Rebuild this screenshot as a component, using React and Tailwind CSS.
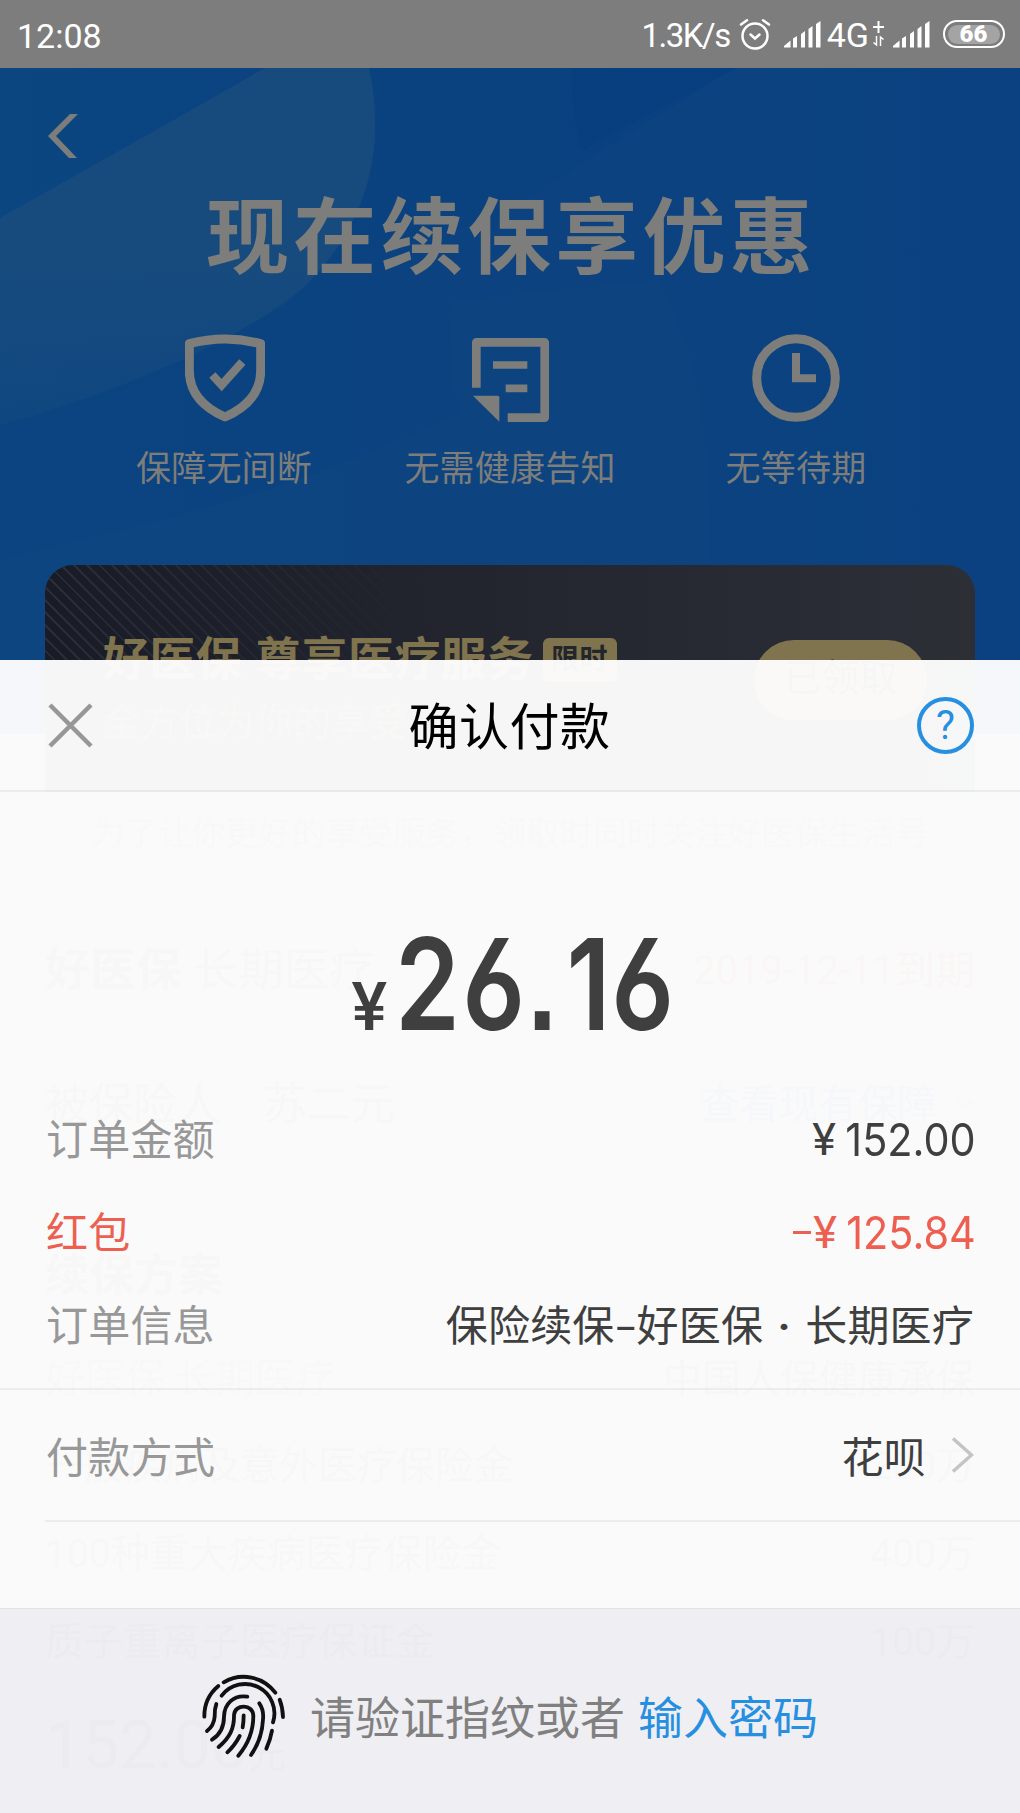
const FONT = "font-['Roboto','Noto_Sans_CJK_SC',sans-serif]"
const DIN = "font-['Inter','Noto_Sans_CJK_SC',sans-serif]"

const features = [
  { icon: ShieldIcon, label: '保障无间断' },
  { icon: NoticeIcon, label: '无需健康告知' },
  { icon: ClockIcon, label: '无等待期' },
]

const plans = [
  { name: '一般疾病及意外医疗保险金', value: '200万' },
  { name: '100种重大疾病医疗保险金', value: '400万' },
  { name: '质子重离子医疗保证金', value: '100万' },
]

function ShieldIcon() {
  return (
    <svg className="w-[80px] h-[88px] ml-[1px]" viewBox="255 70 240 264" fill="none" stroke="currentColor">
      <path strokeWidth="27" strokeLinejoin="round" d="M268 99Q375 71 482 99V180C482 250 436 292 375 319C314 292 268 250 268 180Z" />
      <path strokeWidth="25" d="M337 193L365 223L427 154" />
    </svg>
  )
}

function NoticeIcon() {
  return (
    <svg className="w-[77px] h-[84px] mt-[4px]" viewBox="157 85 231 252" fill="none" stroke="currentColor" strokeWidth="26">
      <path strokeLinejoin="round" d="M170 234V98H375V324H264" />
      <path strokeWidth="23" d="M220 166H323M258 236H323" />
      <path fill="currentColor" stroke="none" d="M160 258H234Q239 258 239 263V336Z" />
    </svg>
  )
}

function ClockIcon() {
  return (
    <svg className="w-[88px] h-[88px]" viewBox="0 0 264 264" fill="none" stroke="currentColor">
      <circle cx="132" cy="132" r="118" strokeWidth="27" />
      <path strokeWidth="24" d="M132 57V133H192" />
    </svg>
  )
}

function SignalIcon() {
  return (
    <svg className="w-[37px] h-[27px]" viewBox="0 0 37 27" fill="currentColor">
      <path d="M0 26.5V25L6.500 19.500V26.500Z" />
      <path d="M9 17.500L13 15V26.500H9ZM17 13L21 10V26.500H17ZM24.500 8L28.500 5V26.500H24.500ZM32 3L36.500 0V26.500H32Z" />
    </svg>
  )
}

function FingerprintIcon() {
  return (
    <svg className="w-[84px] h-[84px]" viewBox="66 72 252 252" fill="none" stroke="#111" strokeWidth="11.5" strokeLinecap="round">
      <path d="M131 97A118 118 0 0 1 286 128" />
      <path d="M115 108A118 118 0 0 0 73 200" />
      <path d="M299 149Q308 172 309 201" />
      <path d="M125 137A88 88 0 0 1 279 217" />
      <path d="M276 242Q271 270 259 296" />
      <path d="M109 162Q103 178 104 200Q102 227 81 243" />
      <path d="M202 140C160 134 133 162 132 200C132 235 118 255 96 269" />
      <path d="M238 160Q252 180 249 208C247 250 232 288 213 315" />
      <path d="M116 291C150 262 163 235 162 195C164 161 220 161 220 198C220 245 202 285 175 317" />
      <path d="M191 196Q191 215 188 232" />
      <path d="M179 258Q163 288 142 307" />
    </svg>
  )
}

function StatusBar() {
  return (
    <div className="h-[68px] bg-[#7d7d7d] text-white flex items-center pl-[17px] pr-[15px] text-[34px] leading-none">
      <span className="mr-auto pt-[3px]">12:08</span>
      <span className="text-[33px] tracking-[-1.500px] pt-[2px]">1.3K/s</span>
      <svg className="w-[32px] h-[32px] ml-[9px]" viewBox="0 0 32 32" fill="none" stroke="currentColor" strokeWidth="2.500" strokeLinecap="round">
        <circle cx="16" cy="18" r="12.500" />
        <path d="M11.500 16.500L16 20.500L20.500 16.500M2 6.500L8 2.200M30 6.500L24 2.200" />
      </svg>
      <div className="ml-[13px]"><SignalIcon /></div>
      <span className="ml-[6px] pt-[1px]">4G</span>
      <svg className="w-[13px] h-[26px] ml-[3px]" viewBox="0 0 13 26" fill="none" stroke="currentColor" strokeWidth="2">
        <path d="M6.500 0V12M1 6H12" />
        <path strokeWidth="1.500" d="M4.500 15V24L1.500 21.500M8.500 25V16L11.500 18.500" />
      </svg>
      <div className="ml-[8px]"><SignalIcon /></div>
      <div className="ml-[13px] w-[62px] h-[28px] rounded-full border-[2.500px] border-white p-[2.500px]">
        <div className="h-full w-[52px] rounded-full bg-[#a4a4a4] flex items-center justify-center">
          <span className="text-[24px] font-black leading-none">66</span>
        </div>
      </div>
    </div>
  )
}

function Hero() {
  return (
    <div className="relative h-[666px] overflow-hidden bg-linear-to-r from-[#0b4681] via-[#0a417f] to-[#093f80]">
      {/* soft shapes of the banner */}
      <svg className="absolute inset-0 w-full h-full" viewBox="0 68 1020 666" fill="none">
        <defs>
          <linearGradient id="glow" x1="0" y1="0" x2="0" y2="1">
            <stop offset=".55" stopColor="#174b7e" />
            <stop offset="1" stopColor="#174b7e" stopOpacity=".3" />
          </linearGradient>
        </defs>
        <path fill="url(#glow)" d="M0 218Q130 145 265 68H369C382 130 382 220 290 300C200 360 90 400 0 425Z" />
        <path fill="#0d447f" d="M0 425C140 395 260 330 330 265L500 215Q600 150 735 68H1020V734H0Z" opacity=".55" />
        <path fill="#12487f" d="M450 300Q445 370 460 410Q330 480 120 530L0 560V734H690Q725 550 700 400Q690 340 660 280Z" opacity=".4" />
        <path fill="#063f80" d="M572 68Q570 110 582 150L735 68Z" opacity=".8" />
      </svg>

      <div className="relative text-[#7d7d7b]">
        <svg className="absolute left-[48px] top-[46px] w-[30px] h-[44px]" viewBox="0 0 30 44" fill="currentColor">
          <path d="M22 0H30L8 22L29 44H21L0 22Z" />
        </svg>
        <h1 className="pt-[126px] pl-[3px] h-[266px] text-center text-[83px] leading-[90px] font-bold tracking-[4.300px]">现在续保享优惠</h1>
        <div className="flex pl-[81px]">
          {features.map(({ icon: Icon, label }) => (
            <div key={label} className="w-[286px] flex flex-col items-center">
              <div className="h-[88px] flex items-center"><Icon /></div>
              <span className="mt-[28px] text-[35px] leading-[40px] tracking-[.2px] whitespace-nowrap">{label}</span>
            </div>
          ))}
        </div>
      </div>
    </div>
  )
}

function BenefitCard() {
  return (
    <div className="relative -mt-[169px] mx-[45px] h-[227px] rounded-t-[28px] overflow-hidden bg-linear-to-r from-[#191c26] via-[#23262f] to-[#2d2f37]">
      <div className="absolute inset-0 bg-[repeating-linear-gradient(45deg,#2b2f39_0px,#2b2f39_2px,transparent_2px,transparent_9px)] [mask-image:linear-gradient(100deg,black,transparent_42%)]" />
      <div className="relative flex pl-[58px] pt-[67px] text-[#80744f]">
        <div>
          <div className="flex items-center h-[54px] text-[46px] font-bold leading-[54px] tracking-[.4px] whitespace-pre">
            好医保<span className="w-[13px]" />尊享医疗服务
            <span className="ml-[9px] w-[74px] h-[44px] mt-[2px] rounded-[6px] bg-[#80744f] text-[#23252d] text-[28px] leading-[44px] text-center">限时</span>
          </div>
          <p className="mt-[14px] text-[38px] leading-[44px] text-[#80744f]/55">全方位为你的享受</p>
        </div>
        <div className="absolute right-[48px] top-[75px] w-[173px] h-[80px] rounded-full bg-[#80744f] text-[#23252d] text-[38px] leading-[76px] text-center">已领取</div>
      </div>
    </div>
  )
}

function RenewPage() {
  return (
    <div className="h-[1813px] overflow-hidden bg-[#7f7f7f] text-[#1a1a1a]">
      <StatusBar />
      <Hero />
      <BenefitCard />
      <p className="h-[83px] pt-[19px] pl-[91px] text-[33.500px] leading-[46px] whitespace-nowrap text-[#4a4a4a]">为了让你更好的享受服务，领取时同时关注好医保生活号</p>
      <div className="px-[45px] text-[39px] text-[#333]">
        <div className="mt-[62px] h-[68px] flex justify-between items-center">
          <span className="text-[45.500px]"><b>好医保</b> 长期医疗</span>
          <span className="text-[40px] text-[#7a2b22]">2019-12-11到期</span>
        </div>
        <div className="mt-[66px] h-[68px] flex items-center text-[44px]">
          <span>被保险人</span>
          <span className="ml-[42px]">苏二元</span>
          <span className="ml-auto mr-[18px] text-[39.500px] text-[#16457f]">查看现有保障</span>
          <svg className="w-[20px] h-[20px]" viewBox="0 0 20 20" fill="none" stroke="#555" strokeWidth="3"><path d="M3 6L10 13L17 6" /></svg>
        </div>
        <p className="mt-[103px] h-[68px] leading-[68px] text-[44.500px] font-bold">续保方案</p>
        <div className="mt-[35px] h-[68px] flex justify-between items-center">
          <span className="text-[#555] text-[40px]">好医保 长期医疗</span>
          <span className="text-[39px]">中国人保健康承保</span>
        </div>
        <div className="pt-[9px]">
          {plans.map(p => (
            <div key={p.name} className="h-[88px] flex justify-between items-center text-[#3f3f3f]">
              <span>{p.name}</span>
              <span>{p.value}</span>
            </div>
          ))}
        </div>
        <p className="mt-[25px] text-[66px] leading-[70px]">152.00<span className="text-[38px]">元</span></p>
      </div>
    </div>
  )
}

function Row({ label, value, red }) {
  return (
    <div className={`h-[93px] px-[46px] pt-[3px] flex items-center justify-between text-[42px] tracking-[.2px] ${red ? 'text-[#ec5f51]' : 'text-[#3f3f3f]'}`}>
      <span className={red ? '' : 'text-[#989898]'}>{label}</span>
      <span>{value}</span>
    </div>
  )
}

function Money({ sign, value }) {
  return (
    <span className="-mr-[2px] -mt-[1px] flex items-center text-[45px] leading-none tracking-normal">
      {sign && <span className="mr-[2px] w-[18px] h-[3px] bg-current" />}
      <span className="w-[25px] -mr-[3px]">¥</span>
      <span className={`${DIN} origin-right scale-x-[.92]`}>{value}</span>
    </span>
  )
}

function OrderInfo() {
  return (
    <>
      保险续保
      <span className="inline-block w-[22px] text-center scale-x-[1.7]">-</span>
      好医保
      <span className="inline-block w-[42px] text-center font-bold">·</span>
      长期医疗
    </>
  )
}

function Amount() {
  return (
    <div className="h-[300px] pt-[129px] pl-[4px] flex justify-center items-baseline text-[#3f3f3f] leading-none">
      <span className="text-[67px] font-medium w-[43px]">¥</span>
      <span className={`${DIN} w-[278px] text-[127px] font-semibold tracking-[3px] whitespace-nowrap origin-left scale-x-[.82] [font-feature-settings:'ss01','cv03']`}>
        26<span className="font-['Liberation_Sans'] font-bold">.</span><span className="ml-[9px] -mr-[2px]">1</span>6
      </span>
    </div>
  )
}

function PaySheet() {
  return (
    <div className="absolute left-0 bottom-0 w-full h-[1153px] flex flex-col">
      <div className="h-[948px] bg-white/96">
        <div className="h-[132px] px-[46px] flex items-center justify-between border-b-2 border-black/5">
          <svg className="w-[50px] h-[50px]" viewBox="0 0 50 50" stroke="#979797" strokeWidth="4.500"><path d="M4 5L45 46M45 5L4 46" /></svg>
          <h2 className="pt-[5px] pl-[6px] text-[50px] leading-none tracking-[.5px] text-black">确认付款</h2>
          <div className="w-[57px] h-[57px] rounded-full border-4 border-[#278fe0] text-[#278fe0] text-[40px] leading-[50px] text-center">?</div>
        </div>

        <Amount />

        <Row label="订单金额" value={<Money value="152.00" />} />
        <Row label="红包" value={<Money sign value="125.84" />} red />
        <Row label="订单信息" value={<OrderInfo />} />

        <div className="mt-[17px] border-t-2 border-black/5 h-[132px] px-[46px] flex items-center text-[42px] tracking-[.3px]">
          <span className="pt-[6px] text-[#989898]">付款方式</span>
          <span className="pt-[6px] ml-auto text-[#3f3f3f]">花呗</span>
          <svg className="ml-[25px] w-[23px] h-[36px]" viewBox="0 0 23 36" fill="none" stroke="#c4c4c4" strokeWidth="3.500"><path d="M2 1.500L20.500 18L2 34.500" /></svg>
        </div>
        <div className="ml-[45px] h-[2px] bg-black/5" />
      </div>

      <div className="flex-1 bg-[#f4f3f8]/96 border-t border-black/5 pl-[202px] pt-[10px] flex items-center text-[45px] leading-none">
        <FingerprintIcon />
        <span className="ml-[24px] pt-[6px] text-[#808080]">请验证指纹或者</span>
        <span className="ml-[13px] pt-[6px] text-[#278fe0]">输入密码</span>
      </div>
    </div>
  )
}

export default function App() {
  return (
    <div className={`relative w-[1020px] h-[1813px] overflow-hidden ${FONT}`}>
      <RenewPage />
      <PaySheet />
    </div>
  )
}
